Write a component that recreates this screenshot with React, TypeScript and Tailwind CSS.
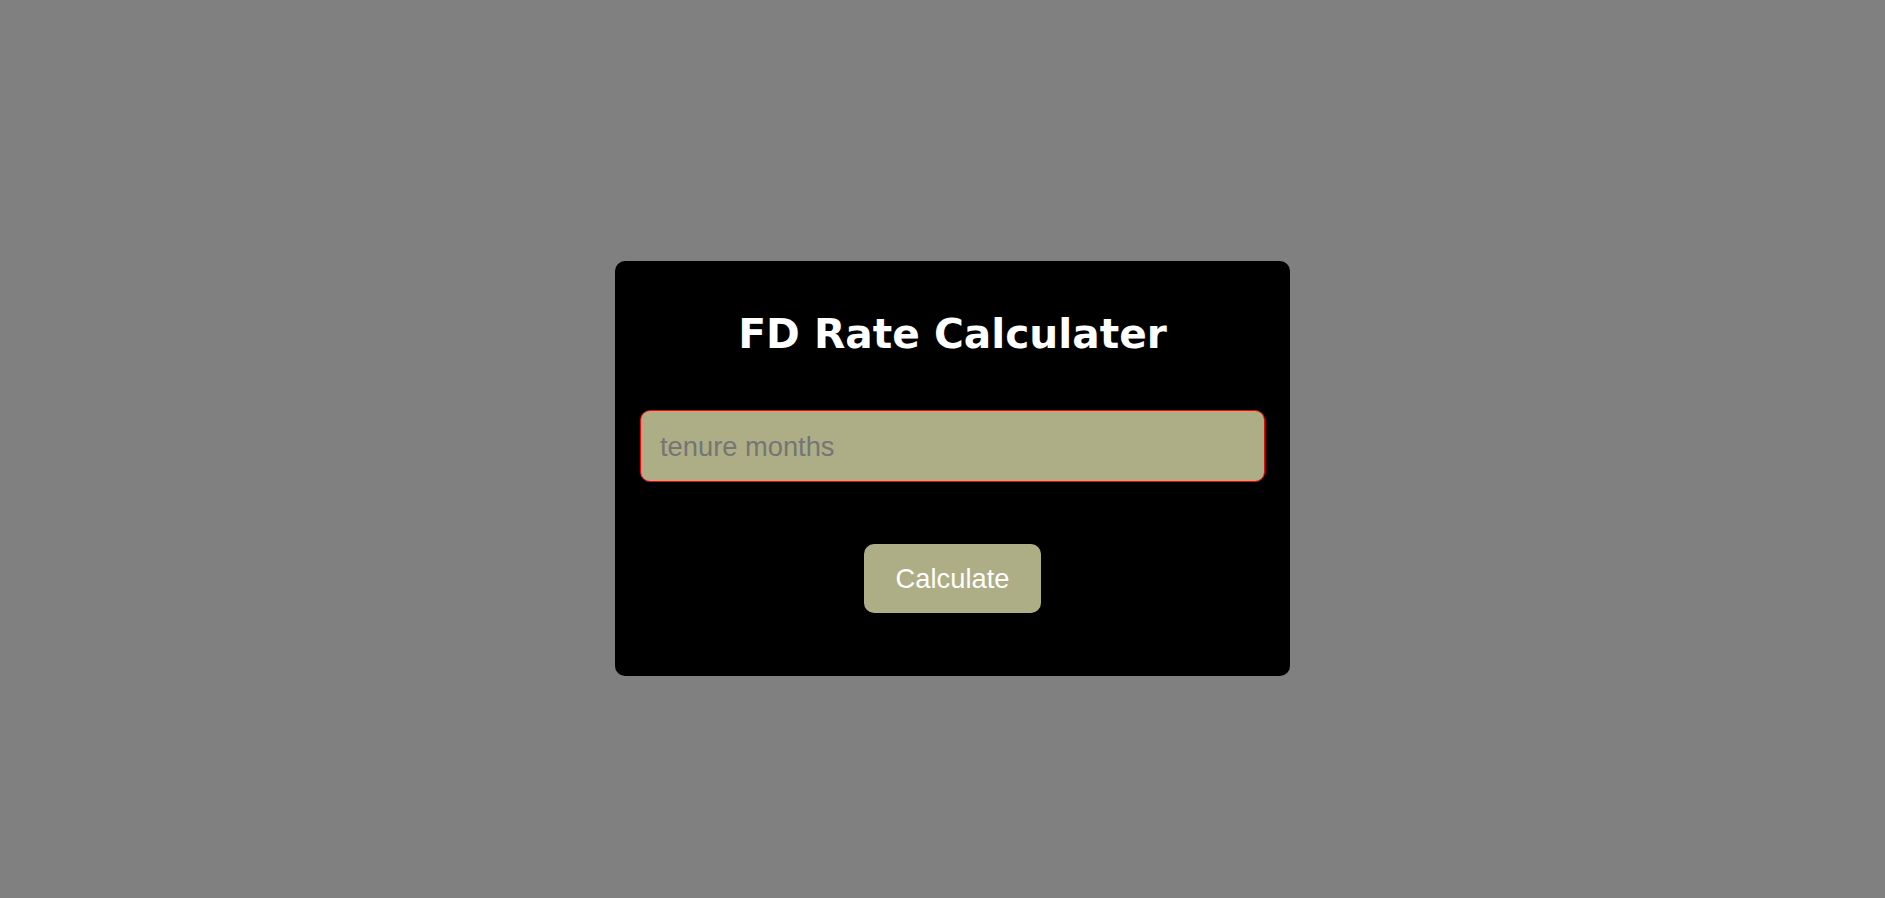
import { useState } from "react";

export default function App() {
  const [months, setMonths] = useState("");

  return (
    <div className="min-h-screen h-screen bg-[#808080] flex items-center justify-center pl-[20px] pt-[39px]">
      <div className="w-[675px] h-[415px] bg-black rounded-[10px] px-[25px] pt-[50px] flex flex-col items-center">
        {/* 제목 */}
        <h1 className="text-white text-[40.7px] font-bold font-['DejaVu_Sans',Verdana,sans-serif] leading-[1.164]">
          FD Rate Calculater
        </h1>

        {/* 입력 */}
        <input
          type="text"
          value={months}
          onChange={(e) => setMonths(e.target.value)}
          placeholder="tenure months"
          className="mt-[52px] w-full h-[72px] bg-[#adae86] border border-[#ff0000] rounded-[10px] pl-[19px] pt-[2px] text-[27.3px] text-black placeholder:text-[#757575] font-['Liberation_Sans',Arial,sans-serif] outline-none"
        />

        {/* 버튼 */}
        <button className="mt-[62px] w-[177px] h-[69px] bg-[#adae86] rounded-[10px] text-white text-[27.3px] pt-[2px] font-['Liberation_Sans',Arial,sans-serif]">
          Calculate
        </button>
      </div>
    </div>
  );
}
